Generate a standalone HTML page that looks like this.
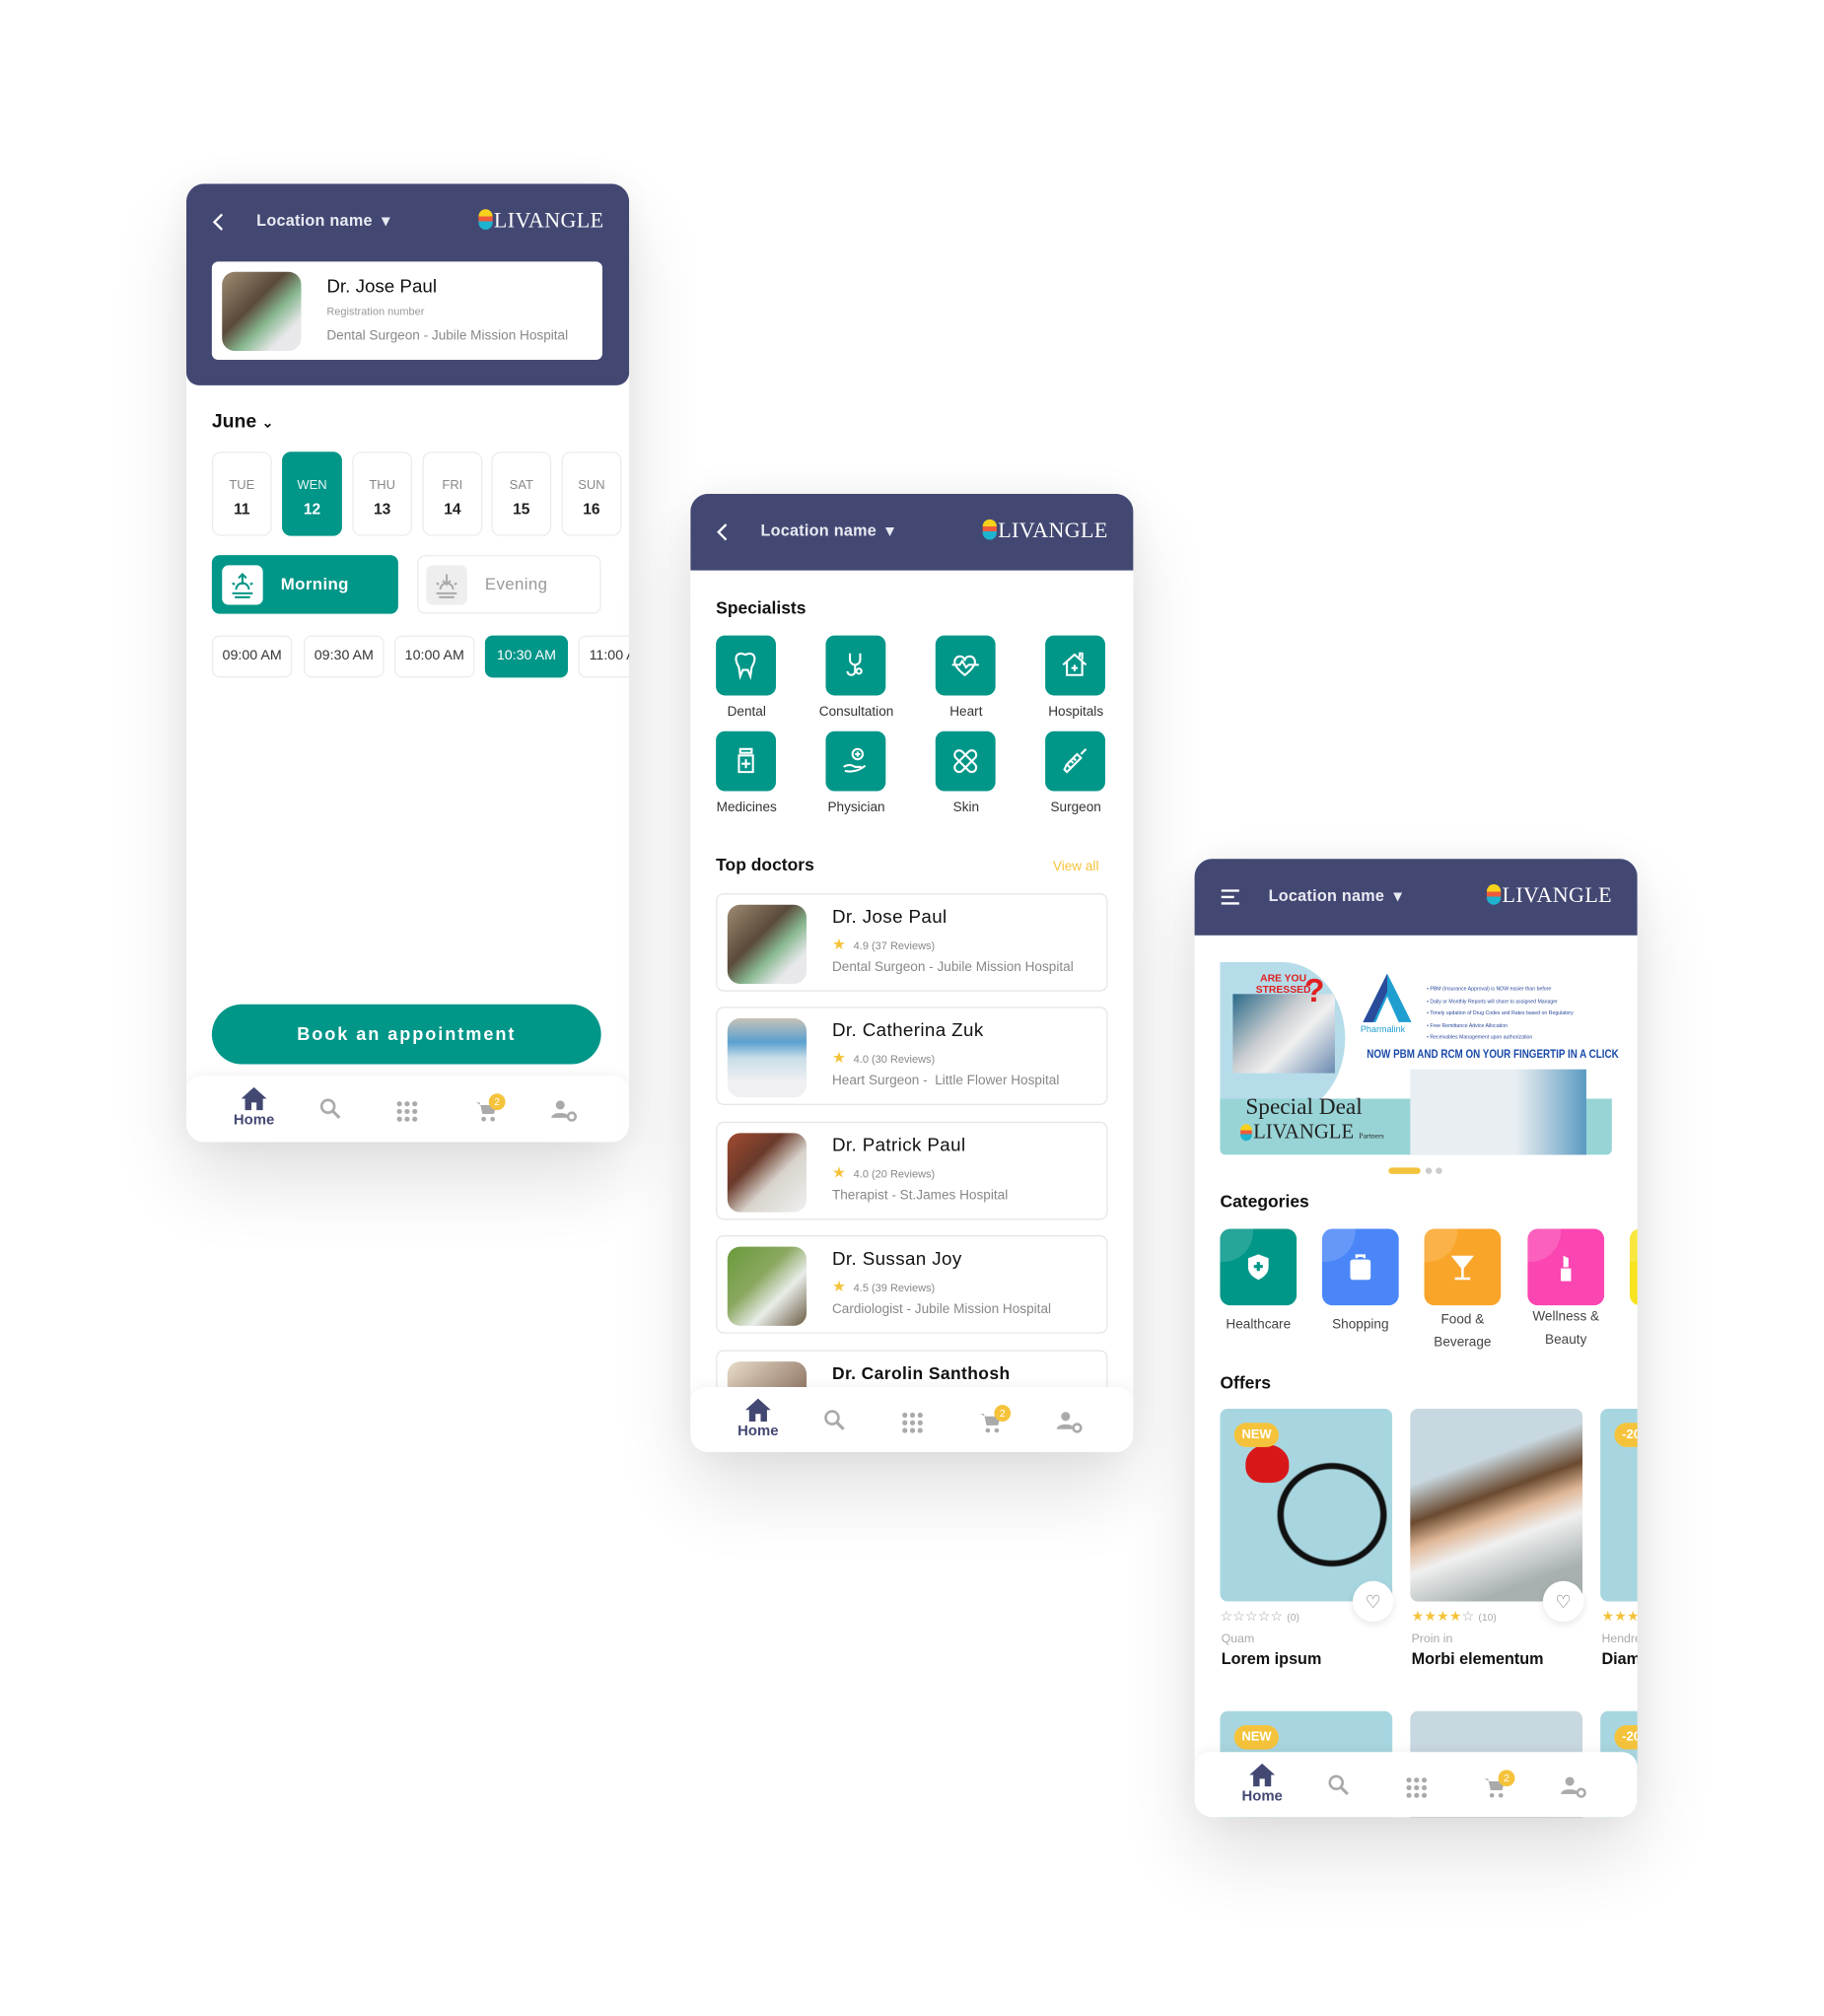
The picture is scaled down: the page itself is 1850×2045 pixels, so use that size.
<!DOCTYPE html>
<html><head><meta charset="utf-8">
<style>
*{box-sizing:border-box;margin:0;padding:0}
html,body{width:1850px;height:2029px;overflow:hidden;background:#fff;font-family:"Liberation Sans",sans-serif}
#s{position:absolute;left:0;top:0;width:1440px;height:1580px;transform:scale(1.2944);transform-origin:0 0}
.ph{position:absolute;width:347px;height:751px;background:#fff;border-radius:14px;overflow:hidden;box-shadow:0 30px 60px rgba(0,0,0,.12),0 0 30px rgba(0,0,0,.06)}
.hd{position:absolute;left:0;top:0;width:100%;height:60px;background:#434873}
.a{position:absolute}
.loc{color:#e9eaf2;font-size:12.5px;font-weight:bold;letter-spacing:.2px}
.logo{color:#fff;font-family:"Liberation Serif",serif;font-size:17px;letter-spacing:.3px}
.dot{display:inline-block;width:11px;height:16px;border-radius:6px;background:linear-gradient(#f7d21c 0 35%,#ef5a3a 35% 60%,#1eb3cf 60%);vertical-align:-2px;margin-right:1px}
.t{position:absolute;white-space:nowrap}
.day{position:absolute;top:210px;width:47px;height:66px;border:1px solid #ececec;border-radius:7px;text-align:center;color:#888;font-size:10px;padding-top:20px}
.day b{display:block;color:#222;font-size:12px;margin-top:6px}
.day.on{background:#009688;border-color:#009688;color:#e7f6f4}.day.on b{color:#fff}
.pill{position:absolute;top:354px;height:33px;border:1px solid #ececec;border-radius:6px;font-size:11px;color:#333;text-align:center;line-height:31px;width:63px}
.sq{position:absolute;width:47px;height:47px;background:#009688;border-radius:7px}
.sq svg{position:absolute;left:11px;top:11px}
.lbl{position:absolute;width:86px;text-align:center;font-size:10.5px;color:#333}
.card{position:absolute;left:20px;width:307px;height:77px;border:1px solid #e6e6e6;border-radius:6px;background:#fff}
.card .p{position:absolute;left:8px;top:8px;width:62px;height:62px;border-radius:10px}
.card .n{position:absolute;left:90px;top:10px;font-size:14.5px;color:#111;letter-spacing:.3px}
.card .r{position:absolute;left:90px;top:32px;font-size:8.5px;color:#888}
.card .r i{color:#f5c33b;font-style:normal;font-size:12px;margin-right:6px}
.card .sp{position:absolute;left:90px;top:51px;font-size:10.5px;color:#888}
.nav{position:absolute;left:0;bottom:0;width:100%;height:51px;background:#fff;border-radius:12px 12px 0 0;box-shadow:0 -3px 8px rgba(0,0,0,.04)}
.nav .home{position:absolute;left:33px;top:8px;width:40px;text-align:center;color:#434873;font-weight:bold;font-size:11.5px}
.cat{position:absolute;top:290px;width:60px;height:60px;border-radius:8px;overflow:hidden}
.cat:before{content:"";position:absolute;left:-22px;top:-22px;width:48px;height:48px;border-radius:50%;background:rgba(255,255,255,.15)}
.cat svg{position:absolute;left:18px;top:18px}
.clb{position:absolute;width:80px;text-align:center;font-size:10.5px;color:#444;line-height:18px}
.off{position:absolute;width:135px;height:151px;border-radius:6px;overflow:hidden}
.new{position:absolute;left:11px;top:11px;background:#f5c33b;color:#fff;font-size:10px;font-weight:bold;padding:4px 6px;border-radius:10px}
.hrt{position:absolute;width:32px;height:32px;border-radius:50%;background:#fff;box-shadow:0 2px 6px rgba(0,0,0,.1);text-align:center;line-height:32px;color:#777;font-size:14px}
</style></head><body><div id="s">

<!-- PHONE 1 -->
<div class="ph" style="left:146px;top:144px;height:751px;border-radius:14px">
 <div class="hd" style="height:158px;border-radius:0 0 10px 10px"></div>
 <svg class="a" style="left:20px;top:22px" width="10" height="16"><path d="M8 2 2 8 8 14" stroke="#fff" stroke-width="1.8" fill="none"/></svg>
 <div class="t loc" style="left:55px;top:21px">Location name &nbsp;▾</div>
 <div class="t logo" style="left:229px;top:19px"><span class="dot"></span>LIVANGLE</div>
 <div class="a" style="left:20px;top:61px;width:306px;height:77px;background:#fff;border-radius:5px"></div>
 <div class="a" style="left:28px;top:69px;width:62px;height:62px;border-radius:10px;background:linear-gradient(135deg,#9e8b72,#5a4a3a 40%,#88b890 60%,#e8e8ea 80%)"></div>
 <div class="t" style="left:110px;top:73px;font-size:14.5px;color:#111">Dr. Jose Paul</div>
 <div class="t" style="left:110px;top:95px;font-size:8.5px;color:#999">Registration number</div>
 <div class="t" style="left:110px;top:113px;font-size:10.5px;color:#888">Dental Surgeon - Jubile Mission Hospital</div>
 <div class="t" style="left:20px;top:178px;font-size:15px;font-weight:bold;color:#111">June <span style="font-size:11px">⌄</span></div>
 <div class="day" style="left:20px">TUE<b>11</b></div>
 <div class="day on" style="left:75px">WEN<b>12</b></div>
 <div class="day" style="left:130px">THU<b>13</b></div>
 <div class="day" style="left:185px">FRI<b>14</b></div>
 <div class="day" style="left:239px">SAT<b>15</b></div>
 <div class="day" style="left:294px">SUN<b>16</b></div>
 <div class="a" style="left:20px;top:291px;width:146px;height:46px;background:#009688;border-radius:6px"></div>
 <div class="a" style="left:28px;top:299px;width:32px;height:31px;background:#fff;border-radius:5px"><svg width="32" height="31"><g stroke="#009688" stroke-width="1.6" fill="none"><path d="M8 22h16M10 25h12M11 19a5 5 0 0 1 10 0M16 7v8M13 10l3-3 3 3M8 14l2 1M24 14l-2 1"/></g></svg></div>
 <div class="t" style="left:74px;top:306px;color:#fff;font-weight:bold;font-size:13px;letter-spacing:.3px">Morning</div>
 <div class="a" style="left:181px;top:291px;width:144px;height:46px;border:1px solid #ececec;border-radius:6px"></div>
 <div class="a" style="left:188px;top:299px;width:32px;height:31px;background:#eee;border-radius:5px"><svg width="32" height="31"><g stroke="#aaa" stroke-width="1.6" fill="none"><path d="M8 22h16M10 25h12M11 19a5 5 0 0 1 10 0M16 7v8M13 12l3 3 3-3M8 14l2 1M24 14l-2 1"/></g></svg></div>
 <div class="t" style="left:234px;top:306px;color:#999;font-size:13px;letter-spacing:.3px">Evening</div>
 <div class="pill" style="left:20px">09:00 AM</div>
 <div class="pill" style="left:92px">09:30 AM</div>
 <div class="pill" style="left:163px">10:00 AM</div>
 <div class="pill" style="left:234px;background:#009688;border-color:#009688;color:#fff;width:65px">10:30 AM</div>
 <div class="pill" style="left:307px">11:00 AM</div>
 <div class="a" style="left:20px;top:643px;width:305px;height:47px;background:#009688;border-radius:24px;color:#fff;text-align:center;line-height:47px;font-size:14px;font-weight:bold;letter-spacing:1.5px">Book an appointment</div>
 <div class="nav" style="height:52px">
  <div class="home"><svg width="22" height="20" viewBox="0 0 22 20"><path d="M11 1 1 10h3v9h5v-6h4v6h5v-9h3z" fill="#434873"/></svg><div style="margin-top:-2px">Home</div></div>
  <svg class="a" style="left:104px;top:17px" width="18" height="18"><circle cx="7" cy="7" r="5" stroke="#aaa" stroke-width="2" fill="none"/><path d="M11 11l5 5" stroke="#aaa" stroke-width="2.4"/></svg>
  <svg class="a" style="left:164px;top:19px" width="18" height="18"><g fill="#aaa"><circle cx="3" cy="3" r="2"/><circle cx="9" cy="3" r="2"/><circle cx="15" cy="3" r="2"/><circle cx="3" cy="9" r="2"/><circle cx="9" cy="9" r="2"/><circle cx="15" cy="9" r="2"/><circle cx="3" cy="15" r="2"/><circle cx="9" cy="15" r="2"/><circle cx="15" cy="15" r="2"/></g></svg>
  <svg class="a" style="left:226px;top:19px" width="18" height="18"><path d="M1 2h3l2 9h9l2-7H5" fill="#aaa"/><circle cx="7" cy="15" r="1.8" fill="#aaa"/><circle cx="14" cy="15" r="1.8" fill="#aaa"/></svg>
  <div class="a" style="left:237px;top:14px;width:13px;height:13px;border-radius:50%;background:#f5c33b;color:#fff;font-size:8px;text-align:center;line-height:13px">2</div>
  <svg class="a" style="left:285px;top:19px" width="22" height="18"><circle cx="8" cy="4" r="3.5" fill="#aaa"/><path d="M1 14c0-5 14-5 14 0z" fill="#aaa"/><circle cx="17" cy="13" r="3" fill="none" stroke="#aaa" stroke-width="2"/></svg>
 </div>
</div>

<!-- PHONE 2 -->
<div class="ph" style="left:541px;top:387px">
 <div class="hd"></div>
 <svg class="a" style="left:20px;top:22px" width="10" height="16"><path d="M8 2 2 8 8 14" stroke="#fff" stroke-width="1.8" fill="none"/></svg>
 <div class="t loc" style="left:55px;top:21px">Location name &nbsp;▾</div>
 <div class="t logo" style="left:229px;top:19px"><span class="dot"></span>LIVANGLE</div>
 <div class="t" style="left:20px;top:82px;font-size:13.5px;font-weight:bold;color:#111">Specialists</div>
 <div class="sq" style="left:20px;top:111px"><svg width="25" height="25" fill="none" stroke="#fff" stroke-width="1.6"><path d="M6 4c3-2 5 0 6 0s3-2 6 0c3 3 0 8-1 10l-1 7-2-5h-4l-2 5-1-7C6 12 3 7 6 4z"/></svg></div>
 <div class="sq" style="left:106px;top:111px"><svg width="25" height="25" fill="none" stroke="#fff" stroke-width="1.6"><path d="M8 3v5a4 4 0 0 0 8 0V3M12 12v5a3 3 0 0 1-6 0"/><circle cx="15" cy="17" r="2"/></svg></div>
 <div class="sq" style="left:192px;top:111px"><svg width="25" height="25" fill="none" stroke="#fff" stroke-width="1.6"><path d="M4 10c0-6 8-6 8-1 0-5 8-5 8 1 0 4-8 10-8 10S4 14 4 10zM2 12h6l2-3 3 5 2-2h8"/></svg></div>
 <div class="sq" style="left:278px;top:111px"><svg width="25" height="25" fill="none" stroke="#fff" stroke-width="1.6"><path d="M3 12 12 4l9 8M6 10v10h12V10M12 12v5M9.5 14.5h5M16 6V3h2v5"/></svg></div>
 <div class="lbl" style="left:1px;top:165px">Dental</div>
 <div class="lbl" style="left:87px;top:165px">Consultation</div>
 <div class="lbl" style="left:173px;top:165px">Heart</div>
 <div class="lbl" style="left:259px;top:165px">Hospitals</div>
 <div class="sq" style="left:20px;top:186px"><svg width="25" height="25" fill="none" stroke="#fff" stroke-width="1.6"><path d="M8 3h9v3H8zM7 8h11v13H7zM12.5 11v7M9 14.5h7"/></svg></div>
 <div class="sq" style="left:106px;top:186px"><svg width="25" height="25" fill="none" stroke="#fff" stroke-width="1.6"><circle cx="14" cy="7" r="4"/><path d="M14 5v4M12 7h4M3 17c3-2 6-2 9 0h5M4 20c4 1 10 1 16-4"/></svg></div>
 <div class="sq" style="left:192px;top:186px"><svg width="25" height="25" fill="none" stroke="#fff" stroke-width="1.6"><rect x="2" y="9" width="21" height="7" rx="3.5" transform="rotate(45 12.5 12.5)"/><rect x="2" y="9" width="21" height="7" rx="3.5" transform="rotate(-45 12.5 12.5)"/></svg></div>
 <div class="sq" style="left:278px;top:186px"><svg width="25" height="25" fill="none" stroke="#fff" stroke-width="1.6"><path d="M21 3l-4 4M6 15l8-8 3 3-8 8zM6 15l-2 4 2 2 3-3M9 12l2 2M11 10l2 2"/></svg></div>
 <div class="lbl" style="left:1px;top:240px">Medicines</div>
 <div class="lbl" style="left:87px;top:240px">Physician</div>
 <div class="lbl" style="left:173px;top:240px">Skin</div>
 <div class="lbl" style="left:259px;top:240px">Surgeon</div>
 <div class="t" style="left:20px;top:283px;font-size:13.5px;font-weight:bold;color:#111">Top doctors</div>
 <div class="t" style="left:284px;top:286px;font-size:10.5px;color:#f5c33b">View all</div>
 <div class="card" style="top:313px"><div class="p" style="background:linear-gradient(135deg,#9e8b72,#5a4a3a 40%,#88b890 60%,#e8e8ea 80%)"></div><div class="n">Dr. Jose Paul</div><div class="r"><i>★</i>4.9 (37 Reviews)</div><div class="sp">Dental Surgeon - Jubile Mission Hospital</div></div>
 <div class="card" style="top:402px"><div class="p" style="background:linear-gradient(180deg,#c8c2b6,#5aa0d0 30%,#c8dde8 50%,#f0f0f2 80%)"></div><div class="n">Dr. Catherina Zuk</div><div class="r"><i>★</i>4.0 (30 Reviews)</div><div class="sp">Heart Surgeon -&nbsp; Little Flower Hospital</div></div>
 <div class="card" style="top:492px"><div class="p" style="background:linear-gradient(135deg,#a04a30,#6a3a2a 35%,#d8d4cc 60%,#f0f0f0)"></div><div class="n">Dr. Patrick Paul</div><div class="r"><i>★</i>4.0 (20 Reviews)</div><div class="sp">Therapist - St.James Hospital</div></div>
 <div class="card" style="top:581px"><div class="p" style="background:linear-gradient(135deg,#6a9a3a,#8aa860 40%,#e8ece8 65%,#6a5a40)"></div><div class="n">Dr. Sussan Joy</div><div class="r"><i>★</i>4.5 (39 Reviews)</div><div class="sp">Cardiologist - Jubile Mission Hospital</div></div>
 <div class="card" style="top:671px"><div class="p" style="background:linear-gradient(135deg,#e8dcc8,#6a4a3a)"></div><div class="n" style="font-weight:bold;font-size:13.5px">Dr. Carolin Santhosh</div></div>
 <div class="nav">
  <div class="home"><svg width="22" height="20" viewBox="0 0 22 20"><path d="M11 1 1 10h3v9h5v-6h4v6h5v-9h3z" fill="#434873"/></svg><div style="margin-top:-2px">Home</div></div>
  <svg class="a" style="left:104px;top:17px" width="18" height="18"><circle cx="7" cy="7" r="5" stroke="#aaa" stroke-width="2" fill="none"/><path d="M11 11l5 5" stroke="#aaa" stroke-width="2.4"/></svg>
  <svg class="a" style="left:165px;top:19px" width="18" height="18"><g fill="#aaa"><circle cx="3" cy="3" r="2"/><circle cx="9" cy="3" r="2"/><circle cx="15" cy="3" r="2"/><circle cx="3" cy="9" r="2"/><circle cx="9" cy="9" r="2"/><circle cx="15" cy="9" r="2"/><circle cx="3" cy="15" r="2"/><circle cx="9" cy="15" r="2"/><circle cx="15" cy="15" r="2"/></g></svg>
  <svg class="a" style="left:226px;top:19px" width="18" height="18"><path d="M1 2h3l2 9h9l2-7H5" fill="#aaa"/><circle cx="7" cy="15" r="1.8" fill="#aaa"/><circle cx="14" cy="15" r="1.8" fill="#aaa"/></svg>
  <div class="a" style="left:238px;top:14px;width:13px;height:13px;border-radius:50%;background:#f5c33b;color:#fff;font-size:8px;text-align:center;line-height:13px">2</div>
  <svg class="a" style="left:286px;top:19px" width="22" height="18"><circle cx="8" cy="4" r="3.5" fill="#aaa"/><path d="M1 14c0-5 14-5 14 0z" fill="#aaa"/><circle cx="17" cy="13" r="3" fill="none" stroke="#aaa" stroke-width="2"/></svg>
 </div>
</div>

<!-- PHONE 3 -->
<div class="ph" style="left:936px;top:673px">
 <div class="hd"></div>
 <svg class="a" style="left:20px;top:23px" width="16" height="14"><path d="M1 2h14M1 7h10M1 12h14" stroke="#fff" stroke-width="1.8"/></svg>
 <div class="t loc" style="left:58px;top:21px">Location name &nbsp;▾</div>
 <div class="t logo" style="left:229px;top:19px"><span class="dot"></span>LIVANGLE</div>
 <div class="a" style="left:20px;top:81px;width:98px;height:120px;border-radius:0 50% 50% 0 / 0 50% 50% 0;background:#b6dcea"></div>
 <div class="a" style="left:30px;top:106px;width:80px;height:62px;background:linear-gradient(135deg,#2a6a88,#c8ccd0 40%,#f0f0f0 60%,#6a8ab0)"></div>
 <div class="t" style="left:48px;top:89px;font-size:8px;font-weight:bold;color:#e02020;line-height:9px;text-align:center">ARE YOU<br>STRESSED</div>
 <div class="t" style="left:86px;top:88px;font-size:26px;font-weight:bold;color:#e02020">?</div>
 <svg class="a" style="left:128px;top:88px" width="46" height="48"><path d="M23 2 4 40h10l9-20 9 20h10z" fill="#1e9fd0"/><path d="M23 2 4 40h8L23 16z" fill="#2a4a9a"/></svg>
 <div class="t" style="left:130px;top:131px;font-size:7px;color:#1e9fd0">Pharmalink</div>
 <div class="t" style="left:182px;top:97px;font-size:4px;color:#2a4a9a;line-height:9.5px">• PBM (Insurance Approval) is NOW easier than before<br>• Daily or Monthly Reports will share to assigned Manager<br>• Timely updation of Drug Codes and Rates based on Regulatory<br>• Free Remittance Advice Allocation<br>• Receivables Management upon authorization</div>
 <div class="t" style="left:135px;top:148px;font-size:9.5px;color:#1a4aa8;transform:scaleX(.8);transform-origin:0 0;font-weight:bold">NOW PBM AND RCM ON YOUR FINGERTIP IN A CLICK</div>
 <div class="a" style="left:20px;top:188px;width:307px;height:44px;background:#98d4d6;border-radius:0 0 4px 4px"></div>
 <div class="a" style="left:169px;top:165px;width:138px;height:67px;background:linear-gradient(90deg,#e8eef2 60%,#b8d0e0 75%,#5a9ac0)"></div>
 <div class="t" style="left:40px;top:184px;font-family:'Liberation Serif',serif;font-size:18px;color:#222">Special Deal</div>
 <div class="t" style="left:36px;top:206px;font-family:'Liberation Serif',serif;font-size:16px;color:#222"><span class="dot" style="width:9px;height:13px"></span>LIVANGLE <span style="font-size:6px">Partners</span></div>
 <div class="a" style="left:152px;top:242px;width:25px;height:5px;border-radius:3px;background:#f5c33b"></div>
 <div class="a" style="left:181px;top:242px;width:5px;height:5px;border-radius:50%;background:#ccc"></div>
 <div class="a" style="left:189px;top:242px;width:5px;height:5px;border-radius:50%;background:#ccc"></div>
 <div class="t" style="left:20px;top:261px;font-size:13.5px;font-weight:bold;color:#111">Categories</div>
 <div class="cat" style="left:20px;background:#009688"><svg width="24" height="24"><path d="M12 2 4 5v7c0 5 4 8 8 10 4-2 8-5 8-10V5z" fill="#fff"/><path d="M12 8v7M8.5 11.5h7" stroke="#009688" stroke-width="2.5"/></svg></div>
 <div class="cat" style="left:100px;background:#4a86f7"><svg width="24" height="24"><path d="M9 5V3h6v2" stroke="#fff" stroke-width="2" fill="none"/><rect x="4" y="6" width="16" height="16" rx="2" fill="#fff"/></svg></div>
 <div class="cat" style="left:180px;background:#f9a52a"><svg width="24" height="24"><path d="M3 3h18l-8 10v7h5v2H6v-2h5v-7z" fill="#fff"/></svg></div>
 <div class="cat" style="left:261px;background:#fb45b2"><svg width="24" height="24"><path d="M10 3l4 2v7h-4z" fill="#fff"/><rect x="8" y="13" width="8" height="10" fill="#fff"/></svg></div>
 <div class="cat" style="left:341px;background:#f7e31e"></div>
 <div class="clb" style="left:10px;top:356px">Healthcare</div>
 <div class="clb" style="left:90px;top:356px">Shopping</div>
 <div class="clb" style="left:170px;top:352px">Food &amp;<br>Beverage</div>
 <div class="clb" style="left:251px;top:350px">Wellness &amp;<br>Beauty</div>
 <div class="t" style="left:20px;top:403px;font-size:13.5px;font-weight:bold;color:#111">Offers</div>
 <div class="off" style="left:20px;top:431px;background:radial-gradient(ellipse at 65% 55%,transparent 30%,#111 31%,#111 34%,transparent 35%),#a8d6e0"><div class="a" style="left:20px;top:28px;width:34px;height:30px;background:#d81818;border-radius:50% 50% 40% 40%"></div><div class="new">NEW</div></div>
 <div class="off" style="left:169px;top:431px;background:linear-gradient(160deg,#c8d8e0 30%,#6a4a30 45%,#e0b898 55%,#f0f0f0 65%,#a8b0b0 85%)"></div>
 <div class="off" style="left:318px;top:431px;background:#a8d6e0"><div class="new">-20%</div></div>
 <div class="hrt" style="left:124px;top:566px">♡</div>
 <div class="hrt" style="left:273px;top:566px">♡</div>
 <div class="t" style="left:20px;top:587px;font-size:11px;color:#aaa">☆☆☆☆☆ <span style="font-size:8px">(0)</span></div>
 <div class="t" style="left:170px;top:587px;font-size:11px;color:#f5c33b">★★★★<span style="color:#aaa">☆</span> <span style="font-size:8px;color:#aaa">(10)</span></div>
 <div class="t" style="left:319px;top:587px;font-size:11px;color:#f5c33b">★★★</div>
 <div class="t" style="left:21px;top:606px;font-size:9.5px;color:#aaa">Quam</div>
 <div class="t" style="left:170px;top:606px;font-size:9.5px;color:#aaa">Proin in</div>
 <div class="t" style="left:319px;top:606px;font-size:9.5px;color:#aaa">Hendrerit</div>
 <div class="t" style="left:21px;top:620px;font-size:12.5px;font-weight:bold;color:#111">Lorem ipsum</div>
 <div class="t" style="left:170px;top:620px;font-size:12.5px;font-weight:bold;color:#111">Morbi elementum</div>
 <div class="t" style="left:319px;top:620px;font-size:12.5px;font-weight:bold;color:#111">Diam</div>
 <div class="off" style="left:20px;top:668px;background:#a8d6e0"><div class="new">NEW</div></div>
 <div class="off" style="left:169px;top:668px;background:linear-gradient(180deg,#c8d8e0 40%,#5a3a28 60%)"></div>
 <div class="off" style="left:318px;top:668px;background:#a8d6e0"><div class="new">-20%</div></div>
 <div class="nav">
  <div class="home"><svg width="22" height="20" viewBox="0 0 22 20"><path d="M11 1 1 10h3v9h5v-6h4v6h5v-9h3z" fill="#434873"/></svg><div style="margin-top:-2px">Home</div></div>
  <svg class="a" style="left:104px;top:17px" width="18" height="18"><circle cx="7" cy="7" r="5" stroke="#aaa" stroke-width="2" fill="none"/><path d="M11 11l5 5" stroke="#aaa" stroke-width="2.4"/></svg>
  <svg class="a" style="left:165px;top:19px" width="18" height="18"><g fill="#aaa"><circle cx="3" cy="3" r="2"/><circle cx="9" cy="3" r="2"/><circle cx="15" cy="3" r="2"/><circle cx="3" cy="9" r="2"/><circle cx="9" cy="9" r="2"/><circle cx="15" cy="9" r="2"/><circle cx="3" cy="15" r="2"/><circle cx="9" cy="15" r="2"/><circle cx="15" cy="15" r="2"/></g></svg>
  <svg class="a" style="left:226px;top:19px" width="18" height="18"><path d="M1 2h3l2 9h9l2-7H5" fill="#aaa"/><circle cx="7" cy="15" r="1.8" fill="#aaa"/><circle cx="14" cy="15" r="1.8" fill="#aaa"/></svg>
  <div class="a" style="left:238px;top:14px;width:13px;height:13px;border-radius:50%;background:#f5c33b;color:#fff;font-size:8px;text-align:center;line-height:13px">2</div>
  <svg class="a" style="left:286px;top:19px" width="22" height="18"><circle cx="8" cy="4" r="3.5" fill="#aaa"/><path d="M1 14c0-5 14-5 14 0z" fill="#aaa"/><circle cx="17" cy="13" r="3" fill="none" stroke="#aaa" stroke-width="2"/></svg>
 </div>
</div>

</div></body></html>
